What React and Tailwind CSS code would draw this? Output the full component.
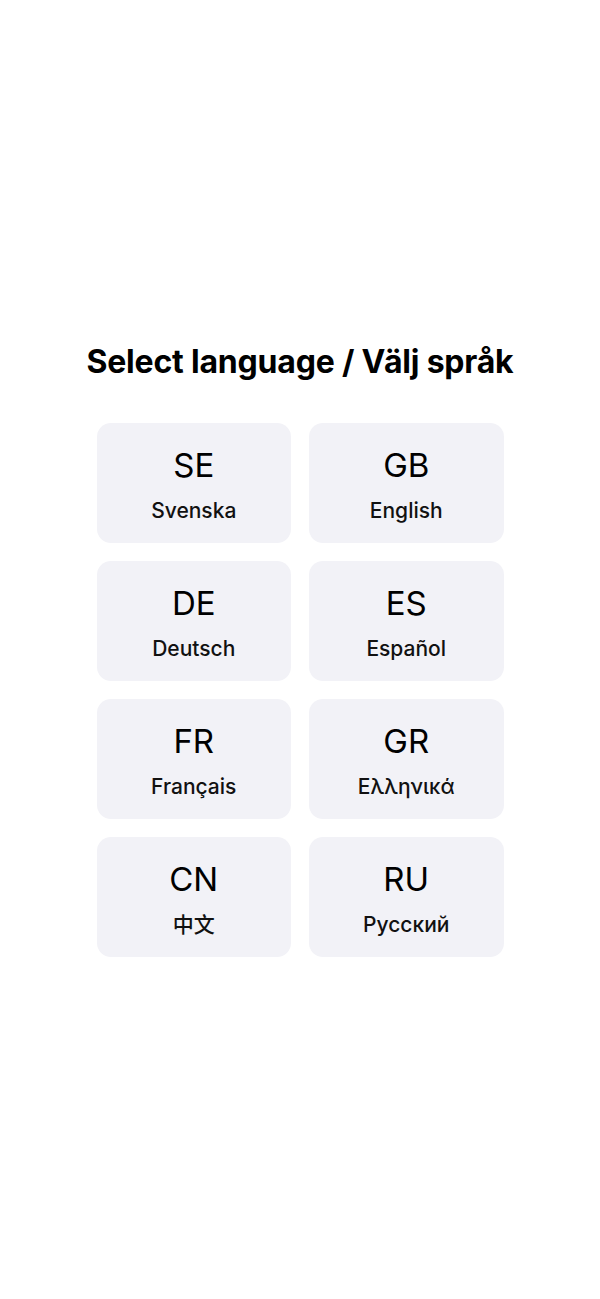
export default function App() {
  const langs = [
    ["SE", "Svenska"],
    ["GB", "English"],
    ["DE", "Deutsch"],
    ["ES", "Español"],
    ["FR", "Français"],
    ["GR", "Ελληνικά"],
    ["CN", "中文"],
    ["RU", "Русский"],
  ];
  return (
    <div
      className="min-h-[1299px] w-full bg-white flex flex-col items-center justify-center text-black"
      style={{ fontFamily: 'Inter, "Noto Sans CJK SC", sans-serif' }}
    >
      <h1 className="text-[32px] font-bold leading-[38px] tracking-[-0.2px]">Select language / Välj språk</h1>
      <div className="mt-[42px] grid grid-cols-2 gap-[18px] w-[407px]">
        {langs.map(([code, name]) => (
          <button
            key={code}
            className="h-[120px] pt-[6px] rounded-[14px] bg-[#f2f2f7] flex flex-col items-center justify-center"
          >
            <span className="text-[33px] leading-[36px] font-normal">{code}</span>
            <span className="mt-[14px] text-[21px] leading-[28px] font-medium text-[#111]">{name}</span>
          </button>
        ))}
      </div>
    </div>
  );
}
